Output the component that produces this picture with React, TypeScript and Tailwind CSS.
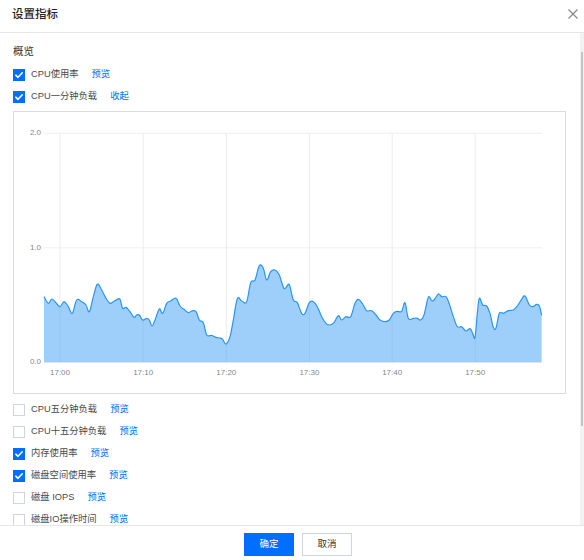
import React from "react";

const z2: [number, number][] = [[132,590],[145,610],[155,597],[165,605],[180,620],[192,605],[205,620],[217,640],[230,600],[245,605],[258,615],[268,635],[280,590],[292,553],[305,570],[318,595],[330,610],[340,605],[352,598],[360,598],[368,625],[378,622],[390,635],[402,652],[410,645],[418,645],[428,660],[440,655],[448,660],[456,678],[465,660],[478,627],[488,640],[500,610],[512,603],[528,595],[540,618],[552,628],[565,638],[575,633],[588,635],[598,660],[610,668],[620,705],[635,706],[648,712],[660,714],[668,718],[678,732],[690,710],[700,660],[712,596],[725,603],[740,605],[752,548],[765,540],[778,497],[790,505],[800,540],[812,515],[825,510],[838,525],[852,565],[865,553]];
const z3: [number, number][] = [[0,560],[10,600],[22,608],[35,640],[45,640],[58,608],[70,605],[82,620],[95,650],[108,670],[120,675],[132,668],[145,647],[155,660],[168,650],[182,650],[195,610],[205,598],[218,612],[230,632],[245,632],[258,645],[270,660],[285,665],[298,660],[310,640],[322,634],[335,634],[345,608],[355,655],[370,655],[382,655],[392,660],[402,645],[415,592],[425,602],[432,600],[445,582],[455,590],[468,590],[478,612],[490,650],[502,680],[515,680],[528,693],[540,686],[548,700],[555,712],[562,640],[568,595],[578,615],[590,618],[600,640],[610,682],[618,684],[628,640],[640,640],[655,632],[670,630],[682,618],[695,598],[705,588],[718,615],[728,620],[740,613],[748,618],[755,646]];

const pts: [number, number][] = [
  ...z2.map(([x, y]) => [x / 3, 100 + y / 3] as [number, number]),
  ...z3.map(([x, y]) => [290 + x / 3, 100 + y / 3] as [number, number]),
];

function smoothPath(p: [number, number][]) {
  let d = `M${p[0][0].toFixed(2)},${p[0][1].toFixed(2)}`;
  const t = 0.18;
  for (let i = 0; i < p.length - 1; i++) {
    const p0 = p[i - 1] || p[i];
    const p1 = p[i];
    const p2 = p[i + 1];
    const p3 = p[i + 2] || p2;
    const c1x = p1[0] + (p2[0] - p0[0]) * t;
    const c1y = p1[1] + (p2[1] - p0[1]) * t;
    const c2x = p2[0] - (p3[0] - p1[0]) * t;
    const c2y = p2[1] - (p3[1] - p1[1]) * t;
    d += ` C${c1x.toFixed(2)},${c1y.toFixed(2)} ${c2x.toFixed(2)},${c2y.toFixed(2)} ${p2[0].toFixed(2)},${p2[1].toFixed(2)}`;
  }
  return d;
}

const linePath = smoothPath(pts);
const BASE = 362.3;
const areaPath = `${linePath} L${pts[pts.length - 1][0].toFixed(2)},${BASE} L${pts[0][0].toFixed(2)},${BASE} Z`;

const xTicks = [
  { x: 60, l: "17:00" },
  { x: 143.2, l: "17:10" },
  { x: 226.3, l: "17:20" },
  { x: 309.4, l: "17:30" },
  { x: 392.2, l: "17:40" },
  { x: 475.2, l: "17:50" },
];
const yTicks = [
  { y: 133.3, l: "2.0" },
  { y: 247.8, l: "1.0" },
  { y: 362.3, l: "0.0" },
];

function Checkbox({ checked }: { checked: boolean }) {
  if (checked) {
    return (
      <span className="flex h-[12px] w-[12px] shrink-0 items-center justify-center bg-[#006eff]">
        <svg width="12" height="12" viewBox="0 0 12 12">
          <path d="M2.8 6.2 L5 8.3 L9.3 3.8" fill="none" stroke="#fff" strokeWidth="1.6" strokeLinecap="round" strokeLinejoin="round" />
        </svg>
      </span>
    );
  }
  return <span className="block h-[12px] w-[12px] shrink-0 border border-[#cfd5de] bg-white" />;
}

function Row({ label, checked, link }: { label: string; checked: boolean; link: string }) {
  return (
    <div className="flex h-[22px] shrink-0 items-center">
      <Checkbox checked={checked} />
      <span className="ml-[6px] text-[9.3px] text-[#4a4a4a]">{label}</span>
      <span className="ml-[13px] text-[9.3px] text-[#006eff]">{link}</span>
    </div>
  );
}

function Chart() {
  return (
    <div className="h-[283px] w-full shrink-0 border border-[#dcdcdc] bg-white">
      <svg width="551" height="281" viewBox="14 112 551 281" className="block">
        {yTicks.map((t) => (
          <line key={t.l} x1="44" x2="542" y1={t.y} y2={t.y} stroke="#efefef" strokeWidth="1" />
        ))}
        {xTicks.map((t) => (
          <line key={t.l} x1={t.x} x2={t.x} y1="133.3" y2="362.3" stroke="#ececec" strokeWidth="1" />
        ))}
        <path d={areaPath} fill="#3ea0f7" fillOpacity="0.5" />
        <path d={linePath} fill="none" stroke="#2a95f0" strokeWidth="1.2" strokeLinejoin="round" />
        {yTicks.map((t) => (
          <text key={t.l} x="41" y={t.y} textAnchor="end" dominantBaseline="middle" fontSize="8" fill="#888" fontFamily="Liberation Sans, sans-serif">
            {t.l}
          </text>
        ))}
        {xTicks.map((t) => (
          <text key={t.l} x={t.x} y="372.5" textAnchor="middle" dominantBaseline="middle" fontSize="8" fill="#888" fontFamily="Liberation Sans, sans-serif">
            {t.l}
          </text>
        ))}
      </svg>
    </div>
  );
}

export default function App() {
  const bottom = [
    { label: "CPU五分钟负载", checked: false, link: "预览" },
    { label: "CPU十五分钟负载", checked: false, link: "预览" },
    { label: "内存使用率", checked: true, link: "预览" },
    { label: "磁盘空间使用率", checked: true, link: "预览" },
    { label: "磁盘 IOPS", checked: false, link: "预览" },
    { label: "磁盘IO操作时间", checked: false, link: "预览" },
  ];
  return (
    <div className="flex h-[560px] w-[584px] flex-col overflow-hidden bg-white font-['Liberation_Sans','Noto_Sans_CJK_SC',sans-serif]">
      <div className="flex h-[33px] shrink-0 items-start justify-between border-b border-[#e6e6e6] pl-[12px] pr-[6px] pt-[6px]">
        <span className="text-[11.5px] leading-[16px] font-medium text-[#222]">设置指标</span>
        <svg width="10" height="10" viewBox="0 0 10 10" className="mt-[3px]">
          <path d="M0.5 0.5 L9.5 9.5 M9.5 0.5 L0.5 9.5" stroke="#888" strokeWidth="1.2" />
        </svg>
      </div>
      <div className="flex min-h-0 flex-1">
        <div className="flex min-w-0 flex-1 flex-col overflow-hidden pl-[13px] pr-[14px] pt-[10px]">
          <div className="h-[16px] shrink-0 text-[10.5px] leading-[16px] text-[#333]">概览</div>
          <div className="mt-[5px] flex flex-col">
            <Row label="CPU使用率" checked link="预览" />
            <Row label="CPU一分钟负载" checked link="收起" />
          </div>
          <div className="mt-[3px]">
            <Chart />
          </div>
          <div className="mt-[5px] flex flex-col">
            {bottom.map((r) => (
              <Row key={r.label} {...r} />
            ))}
          </div>
        </div>
        <div className="flex w-[4px] shrink-0 flex-col bg-[#f2f2f2]">
          <div className="ml-[1px] mt-[19px] h-[374px] w-[2px] bg-[#c4c4c4]" />
        </div>
      </div>
      <div className="flex h-[35px] shrink-0 items-start justify-center gap-[8px] border-t border-[#e6e6e6] pl-[12px] pt-[7px]">
        <button className="flex h-[23px] w-[50px] items-center justify-center bg-[#006eff] text-[9.5px] text-white">确定</button>
        <button className="flex h-[23px] w-[50px] items-center justify-center border border-[#cfd5de] bg-white text-[9.5px] text-[#333]">取消</button>
      </div>
    </div>
  );
}
